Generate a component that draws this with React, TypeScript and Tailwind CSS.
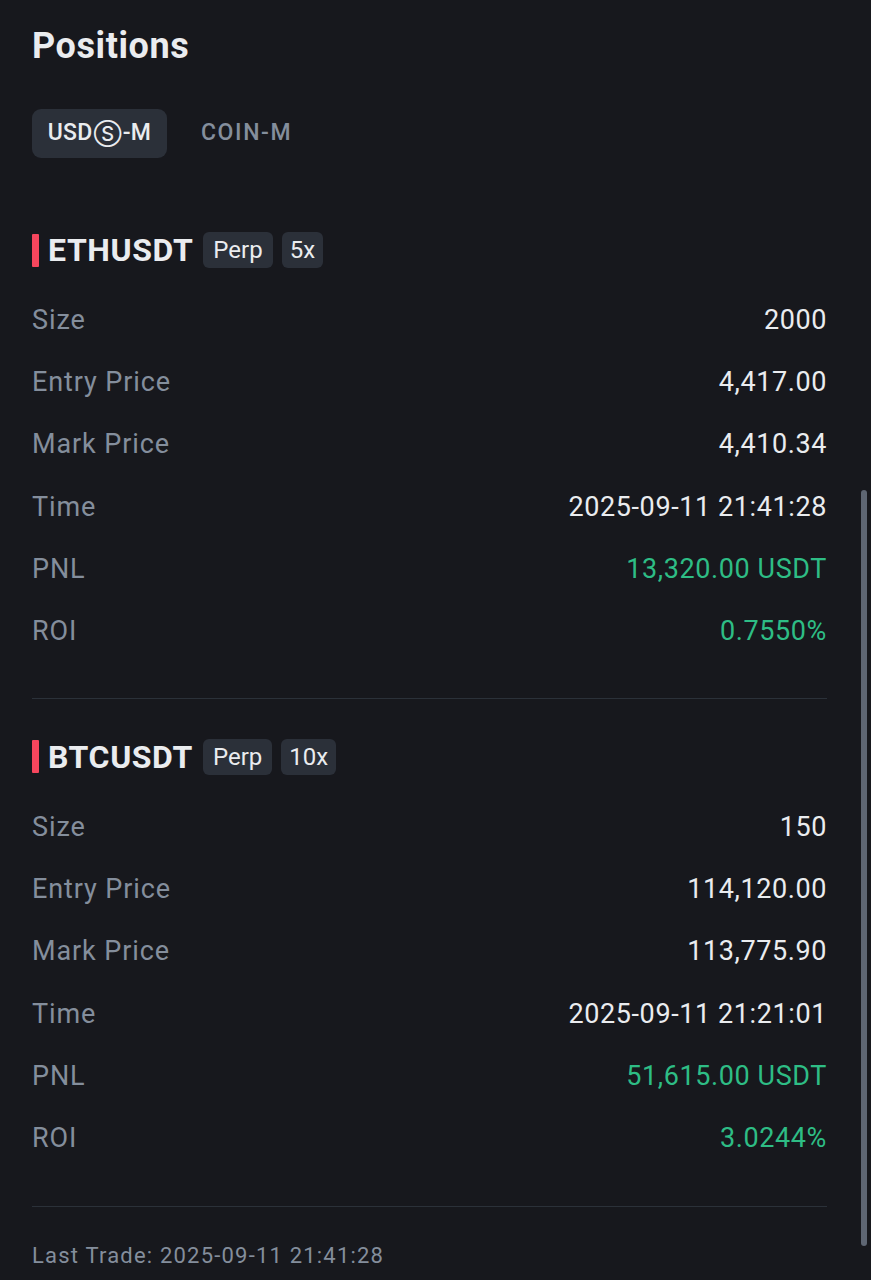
import React from "react";

type Row = { label: string; value: string; green?: boolean };

const eth: Row[] = [
  { label: "Size", value: "2000" },
  { label: "Entry Price", value: "4,417.00" },
  { label: "Mark Price", value: "4,410.34" },
  { label: "Time", value: "2025-09-11 21:41:28" },
  { label: "PNL", value: "13,320.00 USDT", green: true },
  { label: "ROI", value: "0.7550%", green: true },
];

const btc: Row[] = [
  { label: "Size", value: "150" },
  { label: "Entry Price", value: "114,120.00" },
  { label: "Mark Price", value: "113,775.90" },
  { label: "Time", value: "2025-09-11 21:21:01" },
  { label: "PNL", value: "51,615.00 USDT", green: true },
  { label: "ROI", value: "3.0244%", green: true },
];

function Position({ symbol, lev, rows }: { symbol: string; lev: string; rows: Row[] }) {
  return (
    <div>
      <div className="flex items-center h-[36px]">
        <div className="w-[7px] h-[33px] bg-[#f6465d] rounded-[1px]" />
        <span className="ml-[9px] text-[32px] font-bold text-[#eaecef] leading-none tracking-[0.6px]">{symbol}</span>
        <span className="ml-[10px] h-[36px] px-[10px] flex items-center rounded-[6px] bg-[#2b3039] text-[24px] text-[#eaecef]">Perp</span>
        <span className="ml-[9px] h-[36px] px-[8px] flex items-center rounded-[6px] bg-[#2b3039] text-[24px] text-[#eaecef]">{lev}</span>
      </div>
      <div className="mt-[21px] flex flex-col">
        {rows.map((r) => (
          <div key={r.label} className="flex justify-between items-center h-[62.3px] text-[27px]">
            <span className="text-[#848e9c] tracking-[0.9px]">{r.label}</span>
            <span className={(r.green ? "text-[#2ebd85]" : "text-[#eaecef]") + " tracking-[0.6px]"}>{r.value}</span>
          </div>
        ))}
      </div>
    </div>
  );
}

export default function App() {
  return (
    <div className="relative w-[871px] h-[1280px] overflow-hidden bg-[#17181d] font-['Roboto','Inter',sans-serif]">
      <div className="pl-[32px] pr-[44px] pt-[24px]">
        <h1 className="text-[36px] font-bold text-[#eaecef] leading-[44px] tracking-[0.6px]">Positions</h1>
        <div className="mt-[41px] flex items-center">
          <div className="h-[49px] w-[135px] rounded-[9px] bg-[#2b3039] flex items-center justify-center text-[23px] font-medium text-[#eaecef] tracking-[0.3px]">
            USD<span className="text-[20px] mx-[1px]">Ⓢ</span>-M
          </div>
          <div className="ml-[34px] text-[23px] font-medium text-[#848e9c] tracking-[1.6px]">COIN-M</div>
        </div>

        <div className="mt-[74px]">
          <Position symbol="ETHUSDT" lev="5x" rows={eth} />
        </div>
        <div className="mt-[35px] h-px bg-[#2b3139]" />
        <div className="mt-[40px]">
          <Position symbol="BTCUSDT" lev="10x" rows={btc} />
        </div>
        <div className="mt-[36px] h-px bg-[#2b3139]" />
        <div className="mt-[36px] text-[22px] text-[#848e9c] leading-[26px] tracking-[1.2px]">Last Trade: 2025-09-11 21:41:28</div>
      </div>
      <div className="absolute right-[4px] top-[490px] w-[6px] h-[756px] rounded-full bg-[#5e6673]" />
    </div>
  );
}
